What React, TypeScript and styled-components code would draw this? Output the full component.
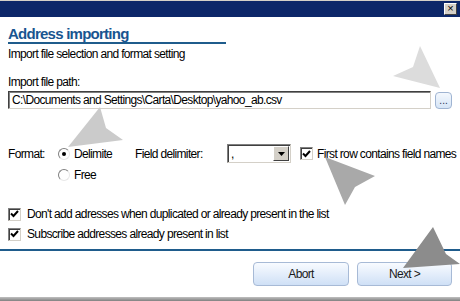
import React from 'react';
import styled, { createGlobalStyle } from 'styled-components';

const GlobalStyle = createGlobalStyle`
  html, body {
    margin: 0;
    padding: 0;
    background: #ffffff;
  }
  body {
    font-family: 'Liberation Sans', Arial, sans-serif;
    font-size: 12px;
    letter-spacing: -0.65px;
    color: #000;
  }
`;

const Window = styled.div`
  position: relative;
  width: 460px;
  height: 301px;
  overflow: hidden;
  background: #fff;
  display: flex;
  flex-direction: column;
`;

const TitleBar = styled.div`
  height: 17px;
  border-top: 1px solid #d4d0c8;
  background: #0c2769;
  display: flex;
  justify-content: flex-end;
  align-items: flex-start;
  padding: 2px 3px 0 0;
  box-sizing: border-box;
`;

const CloseButton = styled.div`
  width: 13px;
  height: 12px;
  background: #d4d0c8;
  border: 1px solid;
  border-color: #fff #404040 #404040 #fff;
  box-sizing: border-box;
  font-size: 11px;
  line-height: 9px;
  text-align: center;
  color: #000;
  letter-spacing: 0;
`;

const Body = styled.div`
  display: flex;
  flex-direction: column;
  padding: 0 8px;
`;

const Heading = styled.div`
  margin-top: 9px;
  width: 218px;
  color: #185590;
  font-size: 15px;
  font-weight: bold;
  letter-spacing: -0.75px;
  line-height: 16px;
  border-bottom: 2px solid #1f5c8c;
`;

const Text = styled.div<{ $top?: number }>`
  margin-top: ${(p) => p.$top ?? 0}px;
  line-height: 14px;
  white-space: nowrap;
`;

const PathRow = styled.div`
  display: flex;
  align-items: center;
  gap: 4px;
  margin-top: 2px;
`;

const PathInput = styled.div`
  width: 425px;
  height: 18px;
  box-sizing: border-box;
  border: 1px solid;
  border-color: #404040 #d4d0c8 #d4d0c8 #404040;
  box-shadow: inset 1px 1px 0 #808080;
  padding: 2px 0 0 3px;
  line-height: 13px;
  white-space: nowrap;
  overflow: hidden;
`;

const BrowseButton = styled.div`
  width: 17px;
  height: 17px;
  box-sizing: border-box;
  border: 1px solid #9fb4d2;
  border-radius: 4px;
  background: linear-gradient(#f4f8fd, #d6e5f7);
  font-size: 10px;
  line-height: 15px;
  text-align: center;
  color: #203050;
  letter-spacing: 0;
`;

const FormatGrid = styled.div`
  display: grid;
  grid-template-columns: 50px 77px 92px 73px auto;
  row-gap: 3px;
  margin-top: 35px;
  align-items: center;
`;

const Option = styled.label`
  display: flex;
  align-items: center;
  gap: 4px;
  height: 18px;
  white-space: nowrap;
`;

const Radio = styled.span<{ $checked?: boolean }>`
  width: 12px;
  height: 12px;
  box-sizing: border-box;
  border-radius: 50%;
  border: 1px solid;
  border-color: #808080 #e8e8e8 #e8e8e8 #808080;
  background: #fff;
  display: flex;
  align-items: center;
  justify-content: center;

  &::after {
    content: '';
    width: 4px;
    height: 4px;
    border-radius: 50%;
    background: ${(p) => (p.$checked ? '#000' : 'transparent')};
  }
`;

const Check = styled.span`
  width: 13px;
  height: 13px;
  box-sizing: border-box;
  border: 1px solid;
  border-color: #808080 #d4d0c8 #d4d0c8 #808080;
  box-shadow: inset 1px 1px 0 #404040;
  background: #fff;
  display: flex;
  align-items: center;
  justify-content: center;
  flex: none;
`;

const Select = styled.div`
  width: 64px;
  height: 19px;
  box-sizing: border-box;
  border: 1px solid;
  border-color: #808080 #d4d0c8 #d4d0c8 #808080;
  box-shadow: inset 1px 1px 0 #404040;
  display: flex;
  align-items: stretch;
  padding: 1px 1px 1px 2px;
`;

const SelectValue = styled.div`
  flex: 1;
  line-height: 16px;
  padding-left: 1px;
  color: #000;
`;

const SelectArrow = styled.div`
  width: 16px;
  box-sizing: border-box;
  background: #d4d0c8;
  border: 1px solid;
  border-color: #fff #404040 #404040 #fff;
  display: flex;
  align-items: center;
  justify-content: center;
`;

const CheckList = styled.div`
  display: flex;
  flex-direction: column;
  gap: 6px;
  margin-top: 23px;
`;

const CheckRow = styled.label`
  display: flex;
  align-items: center;
  gap: 6px;
  height: 14px;
  white-space: nowrap;
`;

const Separator = styled.div`
  height: 2px;
  background: #1f5c8c;
  margin-top: 8px;
`;

const Footer = styled.div`
  display: flex;
  justify-content: flex-end;
  gap: 8px;
  padding: 11px 8px 0 0;
`;

const Button = styled.div<{ $width: number }>`
  width: ${(p) => p.$width}px;
  height: 24px;
  box-sizing: border-box;
  border: 1px solid #a7bad6;
  border-radius: 4px;
  background: linear-gradient(#f8fbff 0%, #e6effb 45%, #cfe0f6 100%);
  display: flex;
  align-items: center;
  justify-content: center;
  color: #1a1a1a;
`;

const BottomEdge = styled.div`
  margin-top: auto;
  height: 4px;
  background: linear-gradient(#c0c0c0, #808080);
`;

const Pointers = styled.svg`
  position: absolute;
  left: 0;
  top: 0;
  pointer-events: none;
`;

const Tick = () => (
  <svg width="9" height="8" viewBox="0 0 9 8">
    <path d="M1 3.5 L3.5 6 L8 1" stroke="#000" strokeWidth="2" fill="none" />
  </svg>
);

const App: React.FC = () => (
  <>
    <GlobalStyle />
    <Window>
      <TitleBar>
        <CloseButton>×</CloseButton>
      </TitleBar>
      <Body>
        <Heading>Address importing</Heading>
        <Text $top={3}>Import file selection and format setting</Text>
        <Text $top={14}>Import file path:</Text>
        <PathRow>
          <PathInput>C:\Documents and Settings\Carta\Desktop\yahoo_ab.csv</PathInput>
          <BrowseButton>...</BrowseButton>
        </PathRow>
        <FormatGrid>
          <span>Format:</span>
          <Option>
            <Radio $checked />
            Delimite
          </Option>
          <span>Field delimiter:</span>
          <Select>
            <SelectValue>,</SelectValue>
            <SelectArrow>
              <svg width="7" height="4" viewBox="0 0 7 4">
                <path d="M0 0 H7 L3.5 4 Z" fill="#000" />
              </svg>
            </SelectArrow>
          </Select>
          <Option>
            <Check>
              <Tick />
            </Check>
            First row contains field names
          </Option>
          <span />
          <Option>
            <Radio />
            Free
          </Option>
        </FormatGrid>
        <CheckList>
          <CheckRow>
            <Check>
              <Tick />
            </Check>
            Don't add adresses when duplicated or already present in the list
          </CheckRow>
          <CheckRow>
            <Check>
              <Tick />
            </Check>
            Subscribe addresses already present in list
          </CheckRow>
        </CheckList>
      </Body>
      <Separator />
      <Footer>
        <Button $width={96}>Abort</Button>
        <Button $width={95}>Next &gt;</Button>
      </Footer>
      <BottomEdge />
      <Pointers width="460" height="301" viewBox="0 0 460 301">
        <polygon points="420,46 440,88 393,76 413,67" fill="#dcdcdc" />
        <polygon points="100,107 106,128 123,140 68,147" fill="#cbcbcb" />
        <polygon points="325,157 375,176 355,187 345,205" fill="#a9a9a9" />
        <polygon points="433,227 446,254 460,264 403,268" fill="#8c8c8c" />
      </Pointers>
    </Window>
  </>
);

export default App;
